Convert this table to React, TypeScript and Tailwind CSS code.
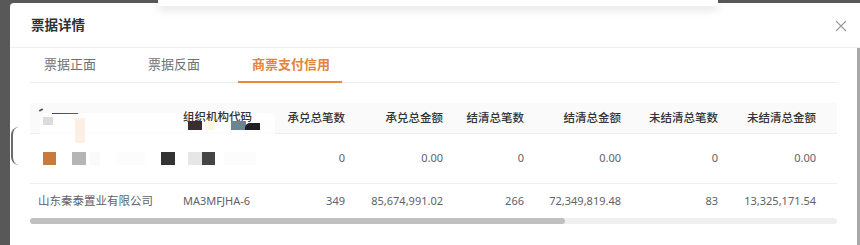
import React from "react";

const cols = "grid grid-cols-[145px_95px_83px_98px_81px_97px_97px_98px_1fr]";

const headers = ["承兑总笔数", "承兑总金额", "结清总笔数", "结清总金额", "未结清总笔数", "未结清总金额"];
const row1 = ["0", "0.00", "0", "0.00", "0", "0.00"];
const row2 = ["349", "85,674,991.02", "266", "72,349,819.48", "83", "13,325,171.54"];

export default function App() {
  return (
    <div
      className="relative w-[860px] h-[245px] overflow-hidden bg-[#585858]"
      style={{ fontFamily: '"Noto Sans","Noto Sans CJK SC",sans-serif' }}
    >
      {/* modal */}
      <div className="absolute left-[10px] top-[3px] w-[850px] h-[242px] bg-white rounded-tl-[4px] flex flex-col">
        <div className="h-[45px] shrink-0 flex items-center justify-between pl-[21px] pr-[13px] border-b border-[#f0f0f0]">
          <span className="text-[13.5px] font-bold text-[#303133]">票据详情</span>
          <svg width="12" height="12" viewBox="0 0 12 12" className="mt-[1px]">
            <path d="M1 1L11 11M11 1L1 11" stroke="#9a9a9a" strokeWidth="1.1" fill="none" />
          </svg>
        </div>
        <div className="relative flex-1 flex">
          <div className="flex-1 pl-[20px] pr-[20px]">
            {/* tabs */}
            <div className="flex h-[35px] border-b border-[#ececec]">
              <div className="w-[104px] pl-[14px] flex items-center text-[13px] text-[#707070]">票据正面</div>
              <div className="w-[104px] pl-[14px] flex items-center text-[13px] text-[#707070]">票据反面</div>
              <div className="w-[104px] pl-[14px] flex items-center text-[13px] font-semibold text-[#e4843a] border-b-2 border-[#e4893e] -mb-px">
                商票支付信用
              </div>
            </div>
            {/* table */}
            <div className="relative mt-[20px] w-[807px]">
              <div className={`${cols} h-[31px] bg-[#fafafa] border-b border-[#eeeeee] text-[11.5px] font-medium text-[#333]`}>
                <div className="pl-[8px]" />
                <div className="relative z-10 pl-[8px] flex items-center -mt-[2px]">组织机构代码</div>
                {headers.map((h) => (
                  <div key={h} className="pr-[8px] flex items-center justify-end">
                    {h}
                  </div>
                ))}
                <div />
              </div>
              <div className={`${cols} h-[50px] border-b border-[#eeeeee] text-[11px] text-[#606266]`}>
                <div className="pl-[13px] flex items-center gap-[16px]">
                  <span className="w-[13px] h-[13px] bg-[#c77a3b]" />
                  <span className="w-[14px] h-[13px] bg-[#b5b5b5]" />
                  <span className="w-[10px] h-[13px] bg-[#fafafa] -ml-[12px]" />
                  <span className="w-[30px] h-[13px] bg-[#fbfcfb]" />
                  <span className="w-[14px] h-[13px] bg-[#333333]" />
                </div>
                <div className="pl-[13px] flex items-center">
                  <span className="w-[14px] h-[13px] bg-[#e6e6e6]" />
                  <span className="w-[13px] h-[13px] bg-[#444444]" />
                  <span className="w-[32px] h-[13px] bg-[#fbfcfb] ml-[9px]" />
                </div>
                {row1.map((v, i) => (
                  <div key={i} className="pr-[8px] flex items-center justify-end">
                    {v}
                  </div>
                ))}
                <div />
              </div>
              <div className={`${cols} h-[34px] text-[11px] text-[#606266]`}>
                <div className="pl-[8px] flex items-center text-[11.5px]">山东秦泰置业有限公司</div>
                <div className="pl-[8px] flex items-center">MA3MFJHA-6</div>
                {row2.map((v, i) => (
                  <div key={i} className="pr-[8px] flex items-center justify-end">
                    {v}
                  </div>
                ))}
                <div />
              </div>
              {/* horizontal scrollbar */}
              <div className="h-[6px] bg-[#f0f0f0] rounded-full">
                <div className="w-[535px] h-[6px] bg-[#c0c0c0] rounded-full" />
              </div>

              {/* redaction overlays in header */}
              <div className="absolute left-[10px] top-[10px] w-[235px] h-[32px] bg-white/80 rounded-[6px]" />
              <div className="absolute z-20 left-[9px] top-[6px] w-[4px] h-[2px] bg-[#555] rotate-[-30deg]" />
              <div className="absolute z-20 left-[22px] top-[10px] w-[26px] h-[1px] bg-gradient-to-r from-[#3a3f7a] to-[#a04040]" />
              <div className="absolute z-20 left-[13px] top-[14px] w-[10px] h-[8px] bg-[#dcdcdc]" />
              <div className="absolute z-20 left-[45px] top-[15px] w-[10px] h-[25px] bg-[#fcefe4]" />
              <div className="absolute z-20 left-[158px] top-[18px] w-[14px] h-[9px] bg-[#3b2c2f]" />
              <div className="absolute z-20 left-[175px] top-[18px] w-[10px] h-[9px] bg-[#fdf8e6]" />
              <div className="absolute z-20 left-[201px] top-[18px] w-[15px] h-[9px] bg-[#6a8591]" />
              <div className="absolute z-20 left-[215px] top-[20px] w-[15px] h-[7px] bg-[#1e1e24] rounded-tl-[5px]" />
            </div>
          </div>
          {/* vertical scrollbar */}
          <div className="w-[3px] bg-[#a8a8a8]" />
        </div>
        {/* left arc artifact */}
        <div className="absolute left-[1px] top-[124px] w-[16px] h-[38px] rounded-full border-l-2 border-[#6a6a6a]" />
      </div>
      {/* top popup */}
      <div className="absolute left-[158px] top-0 w-[560px] h-[6px] bg-white rounded-b-[3px] shadow-[0_3px_10px_rgba(0,0,0,0.15)]" />
    </div>
  );
}
